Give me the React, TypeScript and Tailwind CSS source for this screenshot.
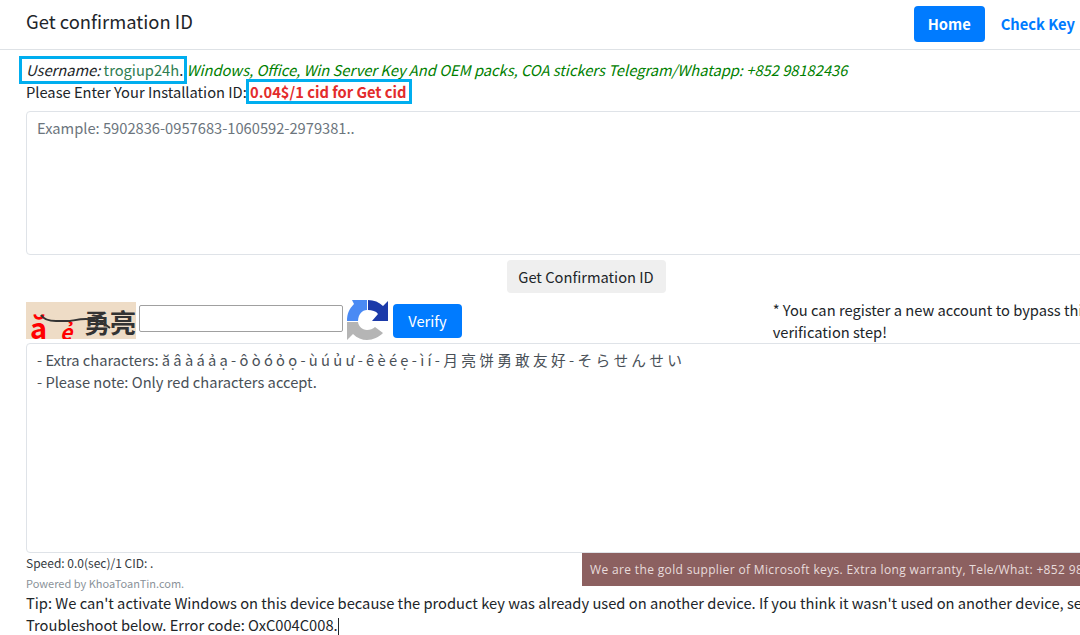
const font = "font-['Noto_Sans_CJK_SC','Noto_Sans',sans-serif]";

function RefreshIcon() {
  return (
    <svg width="42" height="42" viewBox="0 0 42 42" className="shrink-0">
      <path d="M6 1H21V11C16 11 12.5 15 12 22H1C1 15 3 10 8 5Z" fill="#4a8af4" />
      <path d="M22 1C28 1 33 3 37 7L42 2V22H26L32 15C30 12 26 11 22 11Z" fill="#1c3aa9" />
      <path d="M1 23H12C12.5 27 16 31 21 31C24 31 27 30 29 28L37 34C33 38 27 41 21 41C16 41 11 39 7 35L1 41Z" fill="#b5b5b5" />
    </svg>
  );
}

function Captcha() {
  return (
    <div className="relative w-[110px] h-[37px] shrink-0 overflow-hidden bg-[#eedcc6] mt-[3px]">
      <span className="absolute left-[4px] top-[6px] text-[29px] leading-[36px] font-bold text-[#ff0000]">ă</span>
      <span className="absolute left-[34px] top-[14px] text-[21px] leading-[30px] font-bold italic text-[#ff0000]">ẻ</span>
      <span className="absolute left-[58px] top-[3px] text-[26px] leading-[34px] font-bold text-[#333333] whitespace-nowrap">勇亮</span>
      <svg width="110" height="37" viewBox="0 0 110 37" className="absolute left-0 top-0">
        <path d="M15 13C18 18 24 19 30 19C36 19 40 19 44 19C50 18 54 17 60 17C68 17 76 19 84 26" fill="none" stroke="#333333" strokeWidth="2" />
      </svg>
    </div>
  );
}

export default function App() {
  return (
    <div className={`${font} w-[1080px] h-[635px] overflow-hidden bg-white text-[#212529] text-[14.7px] leading-[22px]`}>
      <header className="flex justify-between border-b border-[#dee2e6] h-[50px] pl-[26px] pr-[5px] pt-[6px]">
        <h1 className="text-[18.4px] leading-[32px] font-normal -mt-[1px]">Get confirmation ID</h1>
        <nav className="flex items-start font-bold">
          <a className="w-[71px] h-[36px] flex items-center justify-center rounded bg-[#007bff] text-white">Home</a>
          <a className="ml-[16px] h-[36px] flex items-center text-[#007bff]">Check Key</a>
        </nav>
      </header>

      <main className="w-[1120px] ml-[26px]">
        <div className="pt-[9px] whitespace-nowrap">
          <span className="inline-block h-[22px] pl-[4px] pr-[1px] -ml-[4px] outline-[3px] outline-[#00aeef]">
            <i>Username:</i> <span className="text-[#2e7d52]">trogiup24h</span>.
          </span>{" "}
          <i className="-ml-[1px] text-[#008000]">Windows, Office, Win Server Key And OEM packs, COA stickers Telegram/Whatapp: +852 98182436</i>
        </div>
        <div className="whitespace-nowrap">
          Please Enter Your Installation ID:{" "}
          <b className="inline-block leading-[19px] -ml-[1px] pl-[1px] pr-[2px] text-[#e32b2b] outline-[3px] outline-[#00aeef]">0.04$/1 cid for Get cid</b>
        </div>

        <textarea
          className="block w-full h-[144px] mt-[8px] px-[10px] py-[5px] border border-[#dfe3e8] rounded resize-none outline-none placeholder:text-[#6c757d]"
          placeholder="Example: 5902836-0957683-1060592-2979381.."
        />

        <div className="flex justify-center mt-[5px]">
          <button className="w-[159px] h-[33px] rounded bg-[#efefef] font-normal text-[#212529]">Get Confirmation ID</button>
        </div>

        <div className="grid grid-cols-3 h-[44px] mt-[6px]">
          <div className="col-span-2 flex items-start">
            <Captcha />
            <input className="ml-[3px] mt-[6px] w-[204px] h-[27px] border border-[#a0a0a0] rounded-[2px] bg-white" />
            <div className="ml-[3px]">
              <RefreshIcon />
            </div>
            <button className="ml-[5px] mt-[5px] w-[69px] h-[34px] rounded bg-[#007bff] text-white">Verify</button>
          </div>
          <p>* You can register a new account to bypass this verification step!</p>
        </div>

        <textarea
          className="block w-full h-[210px] px-[10px] py-[5px] border border-[#dfe3e8] rounded resize-none outline-none text-[#495057]"
          defaultValue={"- Extra characters: ă â à á ả ạ - ô ò ó ỏ ọ - ù ú ủ ư - ê è é ẹ - ì í - 月 亮 饼 勇 敢 友 好 - そ ら せ ん せ い\n- Please note: Only red characters accept."}
        />

        <div className="flex h-[34px]">
          <div className="w-[556px] shrink-0">
            <div className="text-[12px] leading-[20px] text-[#343a40]">Speed: 0.0(sec)/1 CID: .</div>
            <div className="text-[11px] leading-[20px] text-[#8a9299]">Powered by KhoaToanTin.com.</div>
          </div>
          <div className="flex-1 h-[33px] bg-[#8c6060] text-[#e8dcdc] font-['Open_Sans',sans-serif] text-[12px] leading-[33px] tracking-[0.35px] pl-[8px] whitespace-nowrap overflow-hidden">
            We are the gold supplier of Microsoft keys. Extra long warranty, Tele/What: +852 98182436
          </div>
        </div>

        <p className="mt-[5px]">
          Tip: We can't activate Windows on this device because the product key was already used on another device. If you think it wasn't used on another device, select Troubleshoot below. Error code: OxC004C008.
          <span className="inline-block w-px h-[17px] bg-[#212529] align-text-bottom" />
        </p>
      </main>
    </div>
  );
}
